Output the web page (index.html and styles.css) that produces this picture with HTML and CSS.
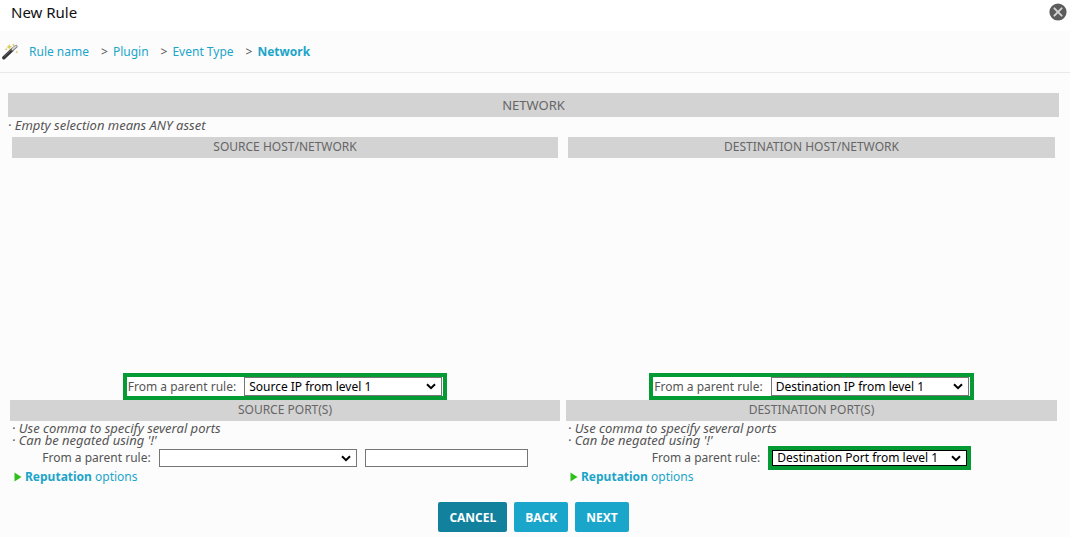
FILE: index.html
```html
<!DOCTYPE html>
<html lang="en">
<head>
  <meta charset="UTF-8">
  <meta name="viewport" content="width=device-width, initial-scale=1.0">
  <title>New Rule</title>
  <link rel="stylesheet" href="styles.css">
</head>
<body>
  <header class="titlebar">
    <h1>New Rule</h1>
    <button type="button" class="close" aria-label="Close">
      <svg width="18" height="18" viewBox="0 0 18 18">
        <circle cx="9" cy="9" r="8.6" fill="#5c5c5c"/>
        <path d="M5.4 5.4l7.2 7.2M12.6 5.4l-7.2 7.2" stroke="#d4d4d4" stroke-width="2" stroke-linecap="round"/>
      </svg>
    </button>
  </header>

  <nav class="steps">
    <svg class="wand" width="18" height="18" viewBox="0 0 18 18">
      <path d="M2.8 14.8L11 7" stroke="#333" stroke-width="3.4" stroke-linecap="round"/>
      <path d="M3 13.6L11 6" stroke="#777" stroke-width="0.8"/>
      <path d="M11.5 6.5L15 3.4" stroke="#777" stroke-width="3.2" stroke-linecap="round"/>
      <path d="M11.6 6.2L15 3.2" stroke="#ddd" stroke-width="1.6" stroke-linecap="round"/>
      <path d="M8.2 1l.9 2.1 2.1.7-2 .9-.9 2.1-.9-2.1-2.1-.8 2.1-.8z" fill="#dccb54"/>
      <path d="M12.4.4l.5 1.1 1.1.4-1.1.5-.5 1.1-.5-1.1-1.1-.5 1.1-.4zM5.2 4.8l.5 1 1 .5-1 .5-.5 1-.5-1-1-.5 1-.5zM15.8 7.4l.5 1 1 .5-1 .5-.5 1-.5-1-1-.5 1-.5z" fill="#d8ca72"/>
    </svg>
    <ol>
      <li><a href="#">Rule name</a></li>
      <li><a href="#">Plugin</a></li>
      <li><a href="#">Event Type</a></li>
      <li><a href="#" class="current">Network</a></li>
    </ol>
  </nav>

  <form class="rule">
    <h2 class="bar bar-main">NETWORK</h2>
    <p class="note">· Empty selection means ANY asset</p>

    <div class="hosts">
      <section class="host">
        <h3 class="bar">SOURCE HOST/NETWORK</h3>
        <div class="field highlight">
          <label for="src-ip">From a parent rule:</label>
          <select id="src-ip"><option>Source IP from level 1</option></select>
        </div>
      </section>
      <section class="host">
        <h3 class="bar">DESTINATION HOST/NETWORK</h3>
        <div class="field highlight">
          <label for="dst-ip">From a parent rule:</label>
          <select id="dst-ip"><option>Destination IP from level 1</option></select>
        </div>
      </section>
    </div>

    <div class="ports">
      <section>
        <h3 class="bar">SOURCE PORT(S)</h3>
        <ul class="hints">
          <li>· Use comma to specify several ports</li>
          <li>· Can be negated using '!'</li>
        </ul>
        <div class="field">
          <label for="src-port">From a parent rule:</label>
          <select id="src-port"><option></option></select>
          <input type="text" class="port-list" aria-label="Source ports">
        </div>
        <a href="#" class="reputation"><svg width="8" height="10" viewBox="0 0 8 10"><path d="M0.5 0.5L7.5 5L0.5 9.5z" fill="#2fc01c"/></svg><span><b>Reputation</b> options</span></a>
      </section>
      <section>
        <h3 class="bar">DESTINATION PORT(S)</h3>
        <ul class="hints">
          <li>· Use comma to specify several ports</li>
          <li>· Can be negated using '!'</li>
        </ul>
        <div class="field">
          <label for="dst-port">From a parent rule:</label>
          <span class="highlight"><select id="dst-port" class="active"><option>Destination Port from level 1</option></select></span>
        </div>
        <a href="#" class="reputation"><svg width="8" height="10" viewBox="0 0 8 10"><path d="M0.5 0.5L7.5 5L0.5 9.5z" fill="#2fc01c"/></svg><span><b>Reputation</b> options</span></a>
      </section>
    </div>

    <div class="actions">
      <button type="button" class="cancel">CANCEL</button>
      <button type="button">BACK</button>
      <button type="button">NEXT</button>
    </div>
  </form>
</body>
</html>
```
FILE: styles.css
```css
* {
  box-sizing: border-box;
}
body {
  margin: 0;
  background: #fcfcfc;
  color: #555;
  font-family: "Noto Sans", "Open Sans", sans-serif;
  font-size: 12px;
  line-height: 16px;
}
h1, h2, h3, p, ul, ol {
  margin: 0;
  padding: 0;
  font-weight: normal;
  list-style: none;
}
a {
  color: #1ba5c9;
  text-decoration: none;
}
.titlebar {
  display: flex;
  justify-content: space-between;
  align-items: flex-start;
  height: 31px;
  padding: 3px 3px 0 11px;
  background: #fff;
}
.titlebar h1 {
  color: #111;
  font-size: 15px;
  line-height: 18px;
}
.close {
  display: flex;
  padding: 0;
  border: none;
  background: none;
  cursor: pointer;
}
.steps {
  display: flex;
  align-items: center;
  gap: 10px;
  height: 42px;
  padding-left: 1px;
  border-bottom: 1px solid #e9e9e9;
}
.steps ol {
  display: flex;
  gap: 12px;
}
.steps li + li::before {
  content: ">";
  margin-right: 5px;
}
.current {
  font-weight: bold;
}
.rule {
  padding: 20px 11px 0 8px;
}
.bar {
  background: #d3d3d3;
  color: #666;
  font-size: 12px;
  line-height: 20px;
  height: 21px;
  text-align: center;
}
.bar-main {
  height: 24px;
  font-size: 13px;
  line-height: 24px;
}
.note {
  height: 20px;
  font-size: 13px;
  font-style: italic;
}
.hosts {
  display: grid;
  grid-template-columns: 546fr 487fr;
  gap: 10px;
  padding: 0 4px;
}
.host {
  display: flex;
  flex-direction: column;
  justify-content: space-between;
  align-items: center;
  min-height: 263px;
}
.host .bar {
  width: 100%;
}
.field {
  display: flex;
  justify-content: center;
  align-items: center;
  gap: 8px;
}
.highlight {
  border: 4px solid #049b34;
  background: #fff;
}
.field.highlight {
  padding: 0 1px;
}
select, .port-list {
  width: 198px;
  height: 18px;
  border: 1px solid #767676;
  border-radius: 0;
  background: #fff;
  color: #000;
  font: inherit;
  padding: 0 4px;
}
select {
  appearance: none;
  background: #fff url("data:image/svg+xml,%3Csvg xmlns='http://www.w3.org/2000/svg' width='10' height='7'%3E%3Cpath d='M1 1.2L5 5.2L9 1.2' fill='none' stroke='%23000' stroke-width='2'/%3E%3C/svg%3E") no-repeat right 5px center;
}
.highlight select {
  display: block;
  height: 19px;
}
.highlight .active {
  width: 195px;
  height: 16px;
  border-color: #000;
  line-height: 14px;
}
.port-list {
  width: 163px;
}
.ports {
  display: grid;
  grid-template-columns: 550fr 491fr;
  gap: 6px;
  padding: 0 2px;
}
.hints {
  padding: 1px 0 0 2px;
  font-size: 13px;
  font-style: italic;
  line-height: 12px;
}
.ports .field {
  height: 24px;
}
.reputation {
  display: flex;
  align-items: center;
  gap: 3px;
  padding-left: 4px;
  line-height: 13px;
}
.actions {
  display: flex;
  justify-content: center;
  gap: 7px;
  padding-top: 19px;
}
.actions button {
  height: 30px;
  padding: 0 11px;
  border: none;
  border-radius: 2px;
  background: #1aa6ca;
  color: #fff;
  font: bold 12px "Open Sans", sans-serif;
  cursor: pointer;
}
.actions .cancel {
  background: #12819e;
}
```
